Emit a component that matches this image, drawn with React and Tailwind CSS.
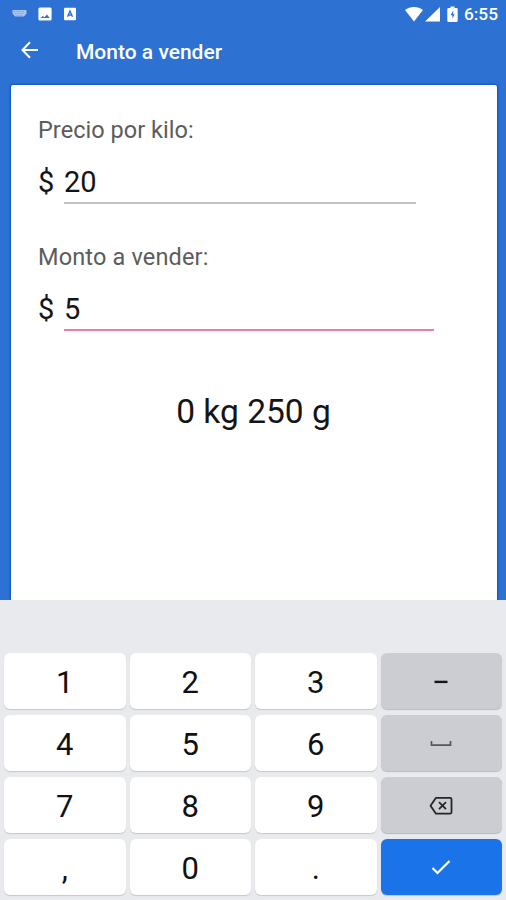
function StatusBar() {
  return (
    <div className="flex h-7 items-center justify-between pl-[12px] pr-[8px] text-white">
      <div className="flex items-center">
        <svg className="h-[14px] w-[15px]" viewBox="0 0 15 14" fill="none">
          <path d="M0.5 3h14v3.500l-2.500 3h-9L0.5 6.500z" fill="#a9c4ef" />
          <path d="M2 4.500h11M3 6.500h9M4.500 8.500h6" stroke="#6f9be2" strokeWidth="0.8" strokeDasharray="1.2 1" />
        </svg>
        <svg className="ml-[11px] h-[14px] w-[14px]" viewBox="0 0 14 14">
          <rect x="0.4" y="0.4" width="13.200" height="13.200" rx="1.500" fill="#fff" />
          <path d="M2.500 11l2.300-2 1.700 1.200 2.500-2.700 2.700 3.500z" fill="#2d71d3" />
        </svg>
        <svg className="ml-[12px] h-[14px] w-[12px]" viewBox="0 0 12 14" fill="none">
          <rect x="0" y="0.700" width="12" height="12.500" rx="1" fill="#fff" />
          <path d="M3.500 9.800L6 4l2.500 5.800M4.300 8h3.400" stroke="#2d71d3" strokeWidth="1.300" />
        </svg>
      </div>
      <div className="flex items-center">
        <svg className="h-[15px] w-[18px]" viewBox="0 0 18 15">
          <path d="M0 3C5-.9 13-.9 18 3L9 14.500z" fill="#fff" />
        </svg>
        <svg className="ml-[2px] h-[15px] w-[15px]" viewBox="0 0 15 15">
          <path d="M15 0v14.500H0z" fill="#fff" />
        </svg>
        <svg className="ml-[7px] h-[17px] w-[11px]" viewBox="0 0 11 17">
          <path d="M3.500 0.500h4v1.500h2q1.200 0 1.200 1.200v11.600q0 1.200-1.200 1.200h-8q-1.200 0-1.200-1.200V3.200Q.3 2 1.500 2h2z" fill="#fff" />
          <path d="M6.200 4.800L3.600 9.300h1.800v3.200l2.300-4.200H6.200z" fill="#2d71d3" />
        </svg>
        <span className="ml-[6px] text-[17.300px] font-medium leading-7">6:55</span>
      </div>
    </div>
  );
}

function Field({ label, value, labelClass, lineClass }) {
  return (
    <div className="h-[127px]">
      <div className={`h-[32px] text-[23.500px] leading-8 text-[#5c5c5c] ${labelClass}`}>{label}</div>
      <div className="mt-[16px] flex h-[43px] text-[29px] leading-[40px] text-[#151515]">
        <span className="w-[26px]">$</span>
        <div className={lineClass}>{value}</div>
      </div>
    </div>
  );
}

function Key({ children, variant = "light" }) {
  const variants = {
    light: "bg-white text-[#111] shadow-[0_1px_1px_#c5c7ca]",
    gray: "bg-[#cccdd2] text-[#151515] shadow-[0_1px_1px_#b9babf]",
    blue: "bg-[#1a73e8] text-white shadow-[0_1px_1px_#b7c7df]",
  };
  return (
    <button className={`flex h-[56px] items-center justify-center rounded-[6px] pt-[2px] text-[31px] leading-none ${variants[variant]}`}>
      {children}
    </button>
  );
}

function Keyboard() {
  return (
    <div className="h-[300px] bg-[#e8eaed] pl-[4px] pr-[4px] pt-[53px]">
      <div className="grid grid-cols-4 gap-x-[4px] gap-y-[6px]">
        <Key>1</Key>
        <Key>2</Key>
        <Key>3</Key>
        <Key variant="gray">
          <svg className="h-[4px] w-[14px]" viewBox="0 0 14 4">
            <rect x="0.500" y="0.700" width="13" height="2.400" fill="#151515" />
          </svg>
        </Key>
        <Key>4</Key>
        <Key>5</Key>
        <Key>6</Key>
        <Key variant="gray">
          <svg className="h-[8px] w-[22px]" viewBox="0 0 22 8" fill="none">
            <path d="M1.500 1v4.200h19V1" stroke="#55565a" strokeWidth="1.700" />
          </svg>
        </Key>
        <Key>7</Key>
        <Key>8</Key>
        <Key>9</Key>
        <Key variant="gray">
          <svg className="h-[20px] w-[24px]" viewBox="0 0 24 20" fill="none" stroke="#242528">
            <path d="M7 1.800h14q1.500 0 1.500 1.500v12.900q0 1.500-1.500 1.500H7L1.500 9.750z" strokeWidth="1.800" strokeLinejoin="round" />
            <path d="M10 6.200l7 7M17 6.200l-7 7" strokeWidth="1.700" />
          </svg>
        </Key>
        <Key>,</Key>
        <Key>0</Key>
        <Key>.</Key>
        <Key variant="blue">
          <svg className="h-[16px] w-[20px]" viewBox="0 0 20 16" fill="none">
            <path d="M1.500 8l5 5L18.500 1" stroke="#fff" strokeWidth="2.200" />
          </svg>
        </Key>
      </div>
    </div>
  );
}

export default function App() {
  return (
    <div className="flex h-[900px] w-[506px] flex-col overflow-hidden bg-[#2d71d3] font-[Roboto,sans-serif]">
      <StatusBar />
      <header className="flex h-[57px] items-start pl-[21px] text-white">
        <svg className="mt-[13px] h-[18px] w-[18px]" viewBox="0 0 18 18" fill="none">
          <path d="M17 9H1.800M9 1.300L1.500 9 9 16.700" stroke="#fff" strokeWidth="2" />
        </svg>
        <h1 className="ml-[37px] mt-[8px] text-[21px] font-medium leading-8">Monto a vender</h1>
      </header>
      <main className="ml-[11px] mr-[9px] h-[515px] rounded-t-[2px] bg-white pl-[27px] pt-[29px] shadow-[0_0_2px_1px_#1054bd]">
        <Field label="Precio por kilo:" value="20" labelClass="tracking-[0.04px]" lineClass="h-[42px] w-[352px] border-b-2 border-[#c3c3c3]" />
        <Field label="Monto a vender:" value="5" labelClass="tracking-[0.15px]" lineClass="h-[42px] w-[370px] border-b-2 border-[#ec7f9f]" />
        <div className="-ml-[28px] mt-[22px] text-center text-[33.500px] leading-[44px] text-[#151515]">0 kg 250 g</div>
      </main>
      <Keyboard />
    </div>
  );
}
